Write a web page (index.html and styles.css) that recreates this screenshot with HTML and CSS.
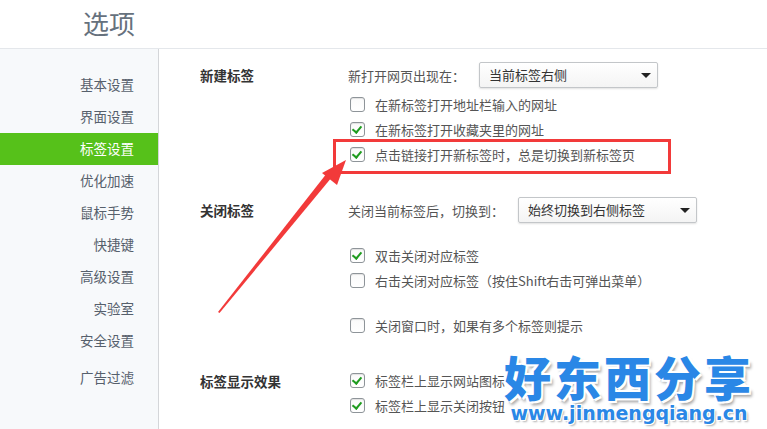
FILE: index.html
```html
<!DOCTYPE html>
<html lang="zh-CN">
  <head>
    <meta charset="UTF-8" />
    <title>选项</title>
    <link rel="stylesheet" href="styles.css">
  </head>
  <body>
    <div class="header">
      <h1>选项</h1>
    </div>

    <div class="main">
      <ul class="sidebar">
        <li>基本设置</li>
        <li>界面设置</li>
        <li class="active">标签设置</li>
        <li>优化加速</li>
        <li>鼠标手势</li>
        <li>快捷键</li>
        <li>高级设置</li>
        <li>实验室</li>
        <li>安全设置</li>
        <li class="extra">广告过滤</li>
      </ul>

      <div class="content">
        <div class="section">
          <div class="label">新建标签</div>
          <div class="options">
            <div class="row first">
              <span class="prompt">新打开网页出现在：</span>
              <div class="select">当前标签右侧<span class="caret"></span></div>
            </div>
            <div class="row"><span class="check"></span>在新标签打开地址栏输入的网址</div>
            <div class="row"><span class="check on"></span>在新标签打开收藏夹里的网址</div>
            <div class="row"><span class="check on"></span>点击链接打开新标签时，总是切换到新标签页</div>
          </div>
        </div>

        <div class="section">
          <div class="label">关闭标签</div>
          <div class="options">
            <div class="row first">
              <span class="prompt">关闭当前标签后，切换到：</span>
              <div class="select">始终切换到右侧标签<span class="caret"></span></div>
            </div>
            <div class="row spaced"><span class="check on"></span>双击关闭对应标签</div>
            <div class="row"><span class="check"></span>右击关闭对应标签（按住Shift右击可弹出菜单）</div>
            <div class="row spaced"><span class="check"></span>关闭窗口时，如果有多个标签则提示</div>
          </div>
        </div>

        <div class="section">
          <div class="label">标签显示效果</div>
          <div class="options">
            <div class="row"><span class="check on"></span>标签栏上显示网站图标</div>
            <div class="row"><span class="check on"></span>标签栏上显示关闭按钮</div>
          </div>
        </div>
      </div>
    </div>

    <svg class="markup" width="767" height="429" viewBox="0 0 767 429">
      <rect x="334.5" y="140.5" width="335" height="32" fill="none" stroke="#f23a3a" stroke-width="3" />
      <polygon points="218,312 219.5,313 332,177 327,173" fill="#f23a3a" />
      <polygon points="346,160 337,185 322,173" fill="#f23a3a" />
    </svg>

    <div class="watermark">
      <div class="wm-title">好东西分享</div>
      <div class="wm-url">www.jinmengqiang.cn</div>
    </div>
  </body>
</html>
```

FILE: styles.css
```css
* {
  margin: 0;
  padding: 0;
  box-sizing: border-box;
}

body {
  font-family: "Noto Sans CJK SC", "Noto Sans", sans-serif;
  background-color: #fff;
  color: #555;
  width: 767px;
  height: 429px;
  overflow: hidden;
  position: relative;
}

.header {
  height: 49px;
  border-bottom: 1px solid #e4e7eb;
  padding-left: 83px;
}

.header h1 {
  font-size: 26px;
  font-weight: normal;
  color: #66717d;
  line-height: 46px;
}

.main {
  display: flex;
  height: 380px;
}

.sidebar {
  list-style: none;
  width: 159px;
  background-color: #f7f9fb;
  border-right: 1px solid #d4d6d9;
  padding-top: 20px;
}

.sidebar li {
  height: 32px;
  line-height: 30px;
  text-align: right;
  padding-right: 24px;
  font-size: 13.5px;
  color: #56606c;
}

.sidebar li.active {
  background-color: #56c11a;
  color: #fff;
}

.sidebar li.extra {
  margin-top: 5px;
}

.content {
  flex: 1;
  padding: 13px 0 0 41px;
}

.section {
  display: flex;
  margin-bottom: 30px;
}

.label {
  width: 148px;
  font-size: 13.5px;
  font-weight: bold;
  color: #333;
  line-height: 26px;
}

.options {
  font-size: 13px;
  color: #555;
}

.row {
  display: flex;
  align-items: center;
  height: 25px;
  white-space: nowrap;
}

.row.first {
  height: 26px;
  margin-bottom: 4px;
}

.prompt {
  margin-right: 14px;
}

.section:nth-child(2) .row.first {
  margin-bottom: 20px;
}

.row.spaced + .row.spaced,
.row + .row.spaced:last-child {
  margin-top: 20px;
}

.select {
  position: relative;
  width: 179px;
  height: 26px;
  line-height: 24px;
  padding-left: 9px;
  border: 1px solid #c3c6c9;
  border-radius: 2px;
  background: linear-gradient(#fff, #f4f4f4);
  box-shadow: 0 1px 2px rgba(0, 0, 0, 0.12);
  color: #333;
}

.caret {
  position: absolute;
  right: 6px;
  top: 10px;
  border-left: 5px solid transparent;
  border-right: 5px solid transparent;
  border-top: 5px solid #222;
}

.check {
  position: relative;
  width: 15px;
  height: 15px;
  margin-left: 2px;
  margin-right: 10px;
  border: 1px solid #8e9499;
  border-radius: 3px;
  background: linear-gradient(#fafafa, #fff);
  box-shadow: inset 0 1px 1px rgba(0, 0, 0, 0.1);
}

.check.on::after {
  content: "";
  position: absolute;
  left: 3px;
  top: 1px;
  width: 4px;
  height: 7px;
  border-right: 2.5px solid #1f9c1f;
  border-bottom: 2.5px solid #1f9c1f;
  transform: rotate(40deg);
}

.markup {
  position: absolute;
  left: 0;
  top: 0;
  pointer-events: none;
}

.watermark {
  position: absolute;
  left: 503px;
  top: 352px;
  width: 252px;
  text-align: center;
  color: #2a87e6;
  font-weight: 900;
}

.wm-title {
  font-size: 47px;
  line-height: 48px;
  letter-spacing: 3px;
  text-shadow: 2px 2px 0 #fff, -2px -2px 0 #fff, 2px -2px 0 #fff, -2px 2px 0 #fff, 3px 4px 3px rgba(0, 0, 0, 0.35);
}

.wm-url {
  margin-top: 3px;
  font-family: "DejaVu Sans", sans-serif;
  font-size: 19px;
  line-height: 20px;
  text-shadow: 1px 1px 0 #fff, -1px -1px 0 #fff, 1px -1px 0 #fff, -1px 1px 0 #fff, 2px 2px 2px rgba(0, 0, 0, 0.3);
}
```
